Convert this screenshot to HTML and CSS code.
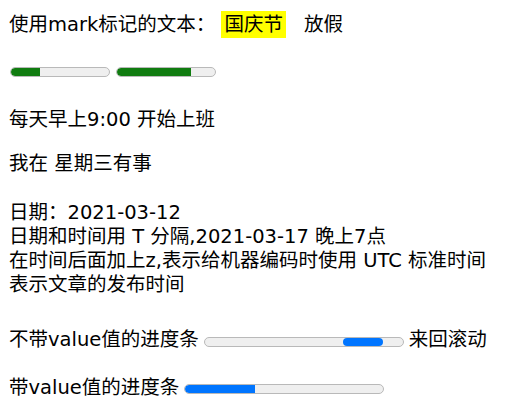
FILE: index.html
```html
<!DOCTYPE html>
<html lang="zh">
<head>
<meta charset="utf-8">
<link rel="stylesheet" href="styles.css">
</head>
<body>
<div class="page">
  <div class="line l1">使用mark标记的文本： <mark class="hl">国庆节</mark><span class="after">放假</span></div>
  <div class="bars">
    <div class="bar small"><div class="fill green" style="width:30%"></div></div>
    <div class="bar small"><div class="fill green" style="width:76%"></div></div>
  </div>
  <div class="line l3">每天早上<time>9:00</time> 开始上班</div>
  <div class="line l4">我在 <time>星期三</time>有事</div>
  <div class="block l5">
    <div>日期：<time>2021-03-12</time></div>
    <div>日期和时间用 T 分隔,<time>2021-03-17</time> 晚上7点</div>
    <div>在时间后面加上z,表示给机器编码时使用 UTC 标准时间</div>
    <div>表示文章的发布时间</div>
  </div>
  <div class="row l9">
    <span>不带value值的进度条</span>
    <div class="bar wide"><div class="fill blue chunk"></div></div>
    <span>来回滚动</span>
  </div>
  <div class="row l10">
    <span>带value值的进度条</span>
    <div class="bar wide"><div class="fill blue" style="width:35%"></div></div>
  </div>
</div>
</body>
</html>
```
FILE: styles.css
```css
html, body {
  margin: 0;
  padding: 0;
  background: #fff;
}
.page {
  padding: 13px 0 0 9px;
  font-family: "DejaVu Sans", "Noto Sans CJK SC", sans-serif;
  font-size: 19.5px;
  line-height: 24px;
  color: #000;
}
.line, .block, .row {
  white-space: nowrap;
}
.hl {
  background: #ffff00;
  color: #000;
  padding: 2px 3px;
}
.after {
  margin-left: 18px;
}
.bars {
  display: flex;
  gap: 6px;
  margin-top: 30px;
  padding-left: 1px;
}
.bar {
  box-sizing: border-box;
  height: 10px;
  border: 1px solid #b9b9b9;
  border-radius: 5px;
  background: #efefef;
  overflow: hidden;
  flex: none;
}
.bar.small { width: 100px; }
.bar.wide { width: 200px; }
.fill {
  height: 100%;
  border-radius: 4px 0 0 4px;
}
.green { background: #107c10; }
.blue { background: #0075ff; }
.chunk {
  width: 40px;
  margin-left: 138px;
  border-radius: 4px;
}
.l3 { margin-top: 31px; }
.l4 { margin-top: 20px; }
.l5 { margin-top: 25px; }
.row {
  display: flex;
  align-items: center;
  gap: 5px;
}
.row .bar { margin-top: 3px; }
.l9 { margin-top: 31px; }
.l10 { margin-top: 24px; }
.l10 .bar { margin-top: 1px; }
```
